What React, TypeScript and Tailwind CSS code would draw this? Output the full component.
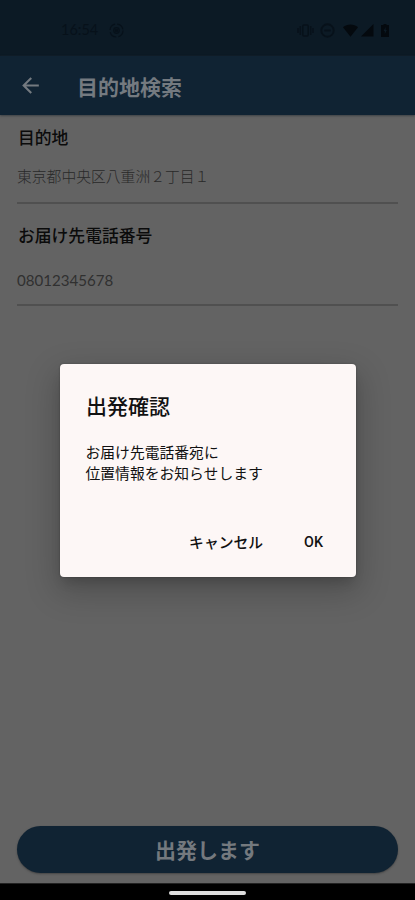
import { useState } from "react";

export default function App() {
    const [open, setOpen] = useState(true);

    return (
        <div className="relative flex h-[900px] w-[415px] flex-col overflow-hidden bg-[#636363] font-['Noto_Sans_CJK_JP',sans-serif]">
            <StatusBar />
            <header className="flex h-[59px] shrink-0 items-center bg-[#102333] pl-[18px] shadow-[0_1px_2px_#3c4146]">
                <BackIcon />
                <h1 className="ml-[34px] text-[21px] leading-[30px] font-bold text-[#747a80]">目的地検索</h1>
            </header>

            <main className="flex grow flex-col px-[17px]">
                <Field label="目的地" value="東京都中央区八重洲２丁目１" className="h-[89px] pt-[10px]" valueClass="mt-[14px] text-[14.8px] font-light" />
                <Field label="お届け先電話番号" value="08012345678" className="h-[102px] pt-[19px]" valueClass="mt-[20px] font-['Lato','Noto_Sans_CJK_JP',sans-serif] text-[15.1px] text-[#303030]" />
                <button
                    onClick={() => setOpen(true)}
                    className="mt-auto mb-[10px] h-[47px] rounded-full bg-[#102333] text-[21px] font-bold text-[#74797e] shadow-[0_1px_2px_#444]"
                >
                    出発します
                </button>
            </main>

            <div className="flex h-[17px] shrink-0 items-center justify-center border-t border-[#222] bg-black pt-[1px]">
                <span className="h-[4px] w-[77px] rounded-full bg-[#dedede]" />
            </div>

            {open && <ConfirmDialog onClose={() => setOpen(false)} />}
        </div>
    );
}

function Field({ label, value, className, valueClass }: { label: string; value: string; className: string; valueClass: string }) {
    return (
        <div className={`border-b-2 border-[#505050] ${className}`}>
            <h2 className="pl-px text-[16.8px] leading-[25px] font-medium text-[#0b0b0b]">{label}</h2>
            <p className={`leading-[24px] text-[#292929] ${valueClass}`}>{value}</p>
        </div>
    );
}

function ConfirmDialog({ onClose }: { onClose: () => void }) {
    return (
        <div className="absolute top-[364px] left-[60px] h-[213px] w-[296px] rounded-[4px] bg-[#fdf7f6] px-[25px] pt-[26px] text-[#111] shadow-[0_12px_32px_4px_rgba(0,0,0,0.2),0_8px_12px_-3px_rgba(0,0,0,0.14),0_0_2px_rgba(0,0,0,0.3)]">
            <h2 className="pl-px text-[21px] leading-[30px] font-medium">出発確認</h2>
            <p className="mt-[21px] pl-[0.5px] text-[14.8px] leading-[21px]">
                お届け先電話番宛に
                <br />
                位置情報をお知らせします
            </p>
            <div className="mt-[46px] flex justify-end gap-[41px] pr-[8px] text-[14.8px] leading-[26px] font-medium">
                <button onClick={onClose}>キャンセル</button>
                <button onClick={onClose} className="font-['Roboto',sans-serif] text-[14.3px]">
                    OK
                </button>
            </div>
        </div>
    );
}

function BackIcon() {
    return (
        <svg width="25" height="25" viewBox="0 0 24 24" fill="#747a80">
            <path d="M20 11H7.83l5.59-5.59L12 4l-8 8 8 8 1.41-1.41L7.83 13H20v-2z" />
        </svg>
    );
}

function StatusBar() {
    return (
        <div className="flex h-[56px] shrink-0 items-center bg-[#0c1a25] pt-[4px] pr-[26px] pl-[61px] text-[#07111a]">
            <span className="w-[48px] font-['Lato',sans-serif] text-[14.5px] leading-[20px]">16:54</span>
            {/* recording */}
            <svg width="15" height="15" viewBox="0 0 15 15" fill="none" stroke="currentColor" strokeWidth="1.2">
                <circle cx="7.5" cy="7.5" r="6.5" strokeDasharray="8 2.2" />
                <circle cx="7.5" cy="7.5" r="2.8" />
                <circle cx="7.5" cy="7.5" r="1.2" fill="currentColor" />
            </svg>
            <div className="ml-auto flex items-center">
                {/* vibrate */}
                <svg width="17" height="15" viewBox="0 0 17 15" fill="none" stroke="currentColor" strokeWidth="1.5">
                    <path d="M1 5v5M3.3 3v9M16 5v5M13.7 3v9" />
                    <rect x="5.8" y="2" width="5.4" height="11" rx="1" />
                </svg>
                {/* do not disturb */}
                <svg className="ml-[6px]" width="15" height="15" viewBox="0 0 15 15" fill="none" stroke="currentColor" strokeWidth="1.9">
                    <circle cx="7.5" cy="7.5" r="6.2" />
                    <path d="M4.3 7.5h6.4" />
                </svg>
                <svg className="ml-[8px] text-[#04090e]" width="15" height="13" viewBox="0 0 15 13" fill="currentColor">
                    <path d="M0 3.2C4.3-.5 10.7-.5 15 3.2L7.5 12.7z" />
                </svg>
                <svg className="ml-[3px] text-[#04090e]" width="13" height="13" viewBox="0 0 13 13" fill="currentColor">
                    <path d="M12.5 0v12.5H0z" />
                </svg>
                {/* battery */}
                <svg className="ml-[7px] text-[#04090e]" width="8" height="13" viewBox="0 0 8 13" fill="currentColor">
                    <path d="M2.5 0h3v1H8v12H0V1h2.5z" />
                    <path d="M4.6 3L2.6 7h1.2v3l2-4H4.6z" fill="#0c1a25" />
                </svg>
            </div>
        </div>
    );
}
